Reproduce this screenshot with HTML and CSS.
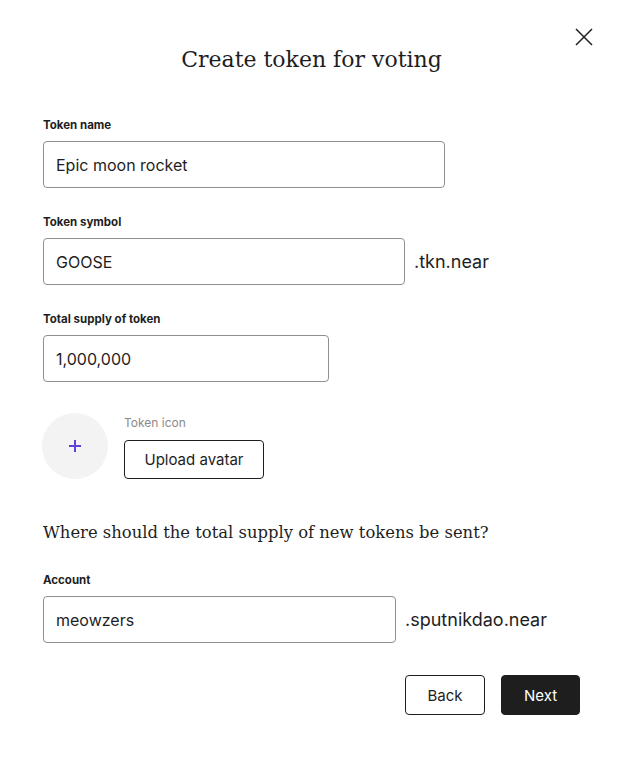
FILE: index.html
```html
<!DOCTYPE html>
<html>
<head>
<meta charset="utf-8">
<link rel="stylesheet" href="styles.css">
</head>
<body>
<div class="modal">
  <button class="close" aria-label="Close">
    <svg width="18" height="18" viewBox="0 0 18 18"><path d="M1 1L17 17M17 1L1 17" stroke="#1e1e1e" stroke-width="1.5" fill="none"/></svg>
  </button>
  <h1 class="title">Create token for voting</h1>
  <div class="form">
    <div class="field">
      <label class="label">Token name</label>
      <div class="row"><div class="input w-name">Epic moon rocket</div></div>
    </div>
    <div class="field">
      <label class="label">Token symbol</label>
      <div class="row"><div class="input w-symbol">GOOSE</div><span class="suffix">.tkn.near</span></div>
    </div>
    <div class="field">
      <label class="label">Total supply of token</label>
      <div class="row"><div class="input w-supply">1,000,000</div></div>
    </div>
    <div class="avatar-row">
      <div class="avatar"><svg width="14" height="14" viewBox="0 0 14 14"><path d="M7 1V13M1 7H13" stroke="#6040d8" stroke-width="2" fill="none"/></svg></div>
      <div class="avatar-side">
        <span class="hint">Token icon</span>
        <button class="btn btn-outline upload">Upload avatar</button>
      </div>
    </div>
    <h2 class="subtitle">Where should the total supply of new tokens be sent?</h2>
    <div class="field">
      <label class="label">Account</label>
      <div class="row"><div class="input w-account">meowzers</div><span class="suffix">.sputnikdao.near</span></div>
    </div>
    <div class="actions">
      <button class="btn btn-outline back">Back</button>
      <button class="btn btn-dark next">Next</button>
    </div>
  </div>
</div>
</body>
</html>
```

FILE: styles.css
```css
* { box-sizing: border-box; }
html, body { margin: 0; padding: 0; background: #ffffff; }
body { font-family: Inter, "Noto Sans", sans-serif; color: #1e1e1e; }
.modal { position: relative; width: 623px; height: 759px; padding: 43px 43px 0 43px; }
.close { position: absolute; left: 575px; top: 28px; width: 18px; height: 18px; padding: 0; border: 0; background: none; display: block; }
.close svg { display: block; }
.title { margin: 0; text-align: center; font-family: "DejaVu Serif", serif; font-weight: 400; font-size: 22px; line-height: 34px; color: #1e1e1e; }
.form { display: flex; flex-direction: column; margin-top: 40px; }
.field { display: flex; flex-direction: column; gap: 8px; margin-bottom: 26px; }
.label { font-size: 11.5px; font-weight: 700; line-height: 16px; color: #1e1e1e; }
.row { display: flex; align-items: center; gap: 9px; }
.input { height: 47px; border: 1.5px solid #8f8f8f; border-radius: 4px; padding: 0 12px; display: flex; align-items: center; font-size: 16px; color: #1e1e1e; background: #fff; }
.w-name { width: 402px; }
.w-symbol { width: 362px; }
.w-supply { width: 286px; }
.w-account { width: 353px; }
.suffix { font-size: 18px; color: #1e1e1e; }
.avatar-row { display: flex; align-items: center; gap: 16px; margin-top: 5px; }
.avatar { width: 66px; height: 66px; border-radius: 50%; background: #f3f3f3; display: flex; align-items: center; justify-content: center; margin-left: -1px; }
.avatar-side { display: flex; flex-direction: column; align-items: flex-start; gap: 9px; padding-top: 2px; }
.hint { font-size: 12px; line-height: 16px; color: #8a8a8a; }
.btn { font-family: Inter, "Noto Sans", sans-serif; font-size: 15px; border-radius: 4px; cursor: pointer; }
.btn-outline { background: #fff; border: 1.5px solid #1e1e1e; color: #1e1e1e; }
.btn-dark { background: #1e1e1e; border: 1.5px solid #1e1e1e; color: #fff; }
.upload { width: 140px; height: 39px; padding: 0; }
.subtitle { margin: 41px 0 26px 0; font-family: "DejaVu Serif", serif; font-weight: 400; font-size: 16.4px; line-height: 26px; color: #1e1e1e; }
.actions { display: flex; justify-content: flex-end; gap: 16px; margin-top: 6px; width: 537px; }
.back { width: 80px; height: 40px; }
.next { width: 79px; height: 40px; }
```
